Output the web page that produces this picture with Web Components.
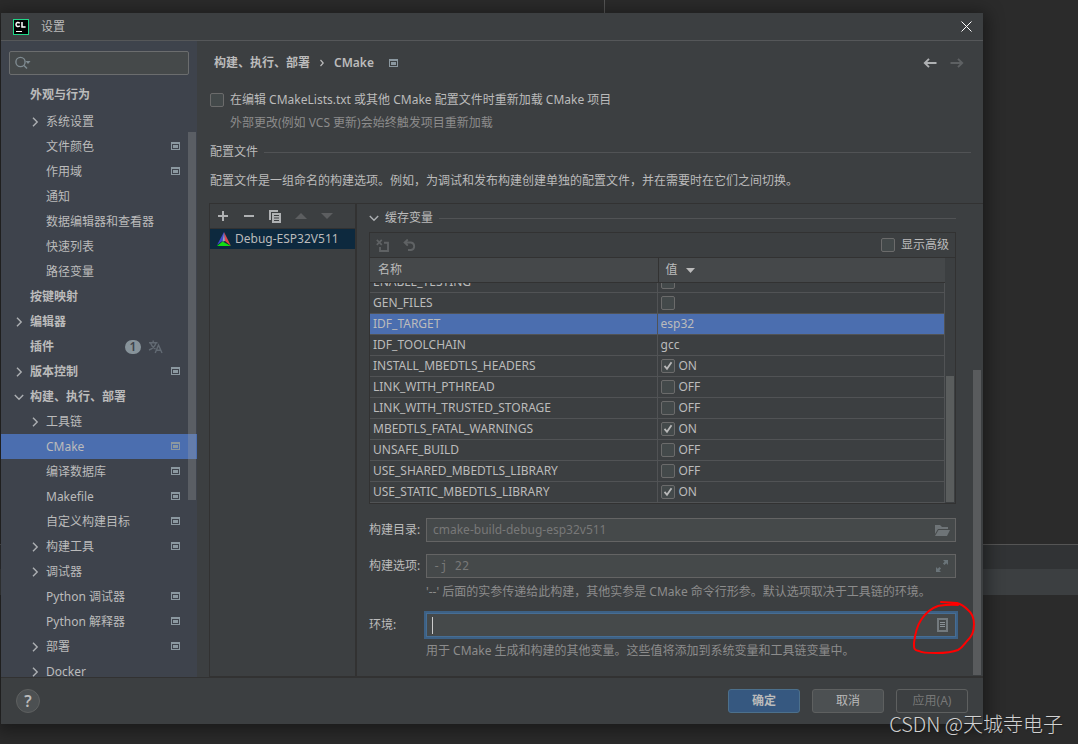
<!DOCTYPE html>
<html lang="zh-CN">
<head>
<meta charset="utf-8">
<title>设置</title>
<style>
  html, body { margin: 0; height: 100%; overflow: hidden; background: #2b2b2b; }
  body {
    font: 12px/20px "Noto Sans", "Noto Sans CJK SC", sans-serif;
    color: #bbbbbb;
    --bg: #3c3f41; --side: #3e434c; --dark: #323232; --line: #515355;
    --sel: #4b6eaf; --dim: #8c8c8c; --field: #45494a; --edge: #646464;
  }
</style>
</head>
<body>
<ide-desktop>
  <settings-dialog heading="设置">
    <settings-tree slot="side">
      <tree-item level="0" bold top>外观与行为</tree-item>
      <tree-item level="1" arrow="right">系统设置</tree-item>
      <tree-item level="1" project>文件颜色</tree-item>
      <tree-item level="1" project>作用域</tree-item>
      <tree-item level="1">通知</tree-item>
      <tree-item level="1">数据编辑器和查看器</tree-item>
      <tree-item level="1">快速列表</tree-item>
      <tree-item level="1">路径变量</tree-item>
      <tree-item level="0" bold>按键映射</tree-item>
      <tree-item level="0" bold arrow="right">编辑器</tree-item>
      <tree-item level="0" bold badge="1">插件</tree-item>
      <tree-item level="0" bold arrow="right" project>版本控制</tree-item>
      <tree-item level="0" bold arrow="down">构建、执行、部署</tree-item>
      <tree-item level="1" arrow="right">工具链</tree-item>
      <tree-item level="1" project selected>CMake</tree-item>
      <tree-item level="1" project>编译数据库</tree-item>
      <tree-item level="1" project>Makefile</tree-item>
      <tree-item level="1" project>自定义构建目标</tree-item>
      <tree-item level="1" arrow="right" project>构建工具</tree-item>
      <tree-item level="1" arrow="right">调试器</tree-item>
      <tree-item level="1" project>Python 调试器</tree-item>
      <tree-item level="1" project>Python 解释器</tree-item>
      <tree-item level="1" arrow="right" project>部署</tree-item>
      <tree-item level="1" arrow="right">Docker</tree-item>
    </settings-tree>
    <cmake-page></cmake-page>
    <dialog-footer slot="footer"></dialog-footer>
  </settings-dialog>
  <pen-mark slot="over"></pen-mark>
  <span slot="mark">CSDN @天城寺电子</span>
</ide-desktop>

<script>
const define = (name, html, setup) => {
  const template = document.createElement('template');
  template.innerHTML = html;
  customElements.define(name, class extends HTMLElement {
    constructor() {
      super();
      this.attachShadow({ mode: 'open' }).append(template.content.cloneNode(true));
    }
    connectedCallback() { if (setup) setup(this, this.shadowRoot); }
  });
};

const ICONS = {
  logo: [16, 16, '<rect x=".5" y=".5" width="15" height="15" fill="#000" stroke="#21d789"/><path d="M6.800 4.200C5.300 2.800 3 3.500 3 5.500s2.300 2.800 3.800 1.300M9 3v5h3.600" fill="none" stroke="#fff" stroke-width="1.500"/><path d="M3 12.500h6" stroke="#fff"/>'],
  close: [11, 11, '<path d="M.5.5l10 10M10.500.5l-10 10" stroke="#fff" stroke-width="1"/>'],
  search: [18, 14, '<g fill="none" stroke="#7f8b91" stroke-width="1.400"><circle cx="5.500" cy="6" r="4.600"/><path d="M9 9.500l3 3"/></g><path d="M10.500 5h5L13 8z" fill="#7f8b91"/>'],
  right: [10, 10, '<path d="M3 .8L7.200 5 3 9.200" fill="none" stroke="#adb0b3" stroke-width="1.400"/>'],
  down: [10, 10, '<path d="M.8 3L5 7.200 9.200 3" fill="none" stroke="#adb0b3" stroke-width="1.400"/>'],
  crumb: [6, 8, '<path d="M1.500 1L4.200 4 1.500 7" fill="none" stroke="#bbb" stroke-width="1.200"/>'],
  project: [9, 9, '<path d="M0 0h9v8H0zM1 2v5h7V2z" fill="#8b98a0" fill-rule="evenodd"/><path d="M2 3h5v3H2z" fill="#8b98a0"/>'],
  translate: [15, 14, '<g fill="none" stroke="#626a73" stroke-width="1.400"><path d="M1 2.700h8.500M5.200.5v2M2.500 3c1 3 3 5 5 6M8 3C7 6 4 9 1 10"/><path d="M7.200 13l3.300-8 3.500 8M8.500 10.300h4"/></g>'],
  back: [14, 10, '<path d="M6 .8L1.800 5 6 9.200M2 5h11.500" fill="none" stroke="#afb1b3" stroke-width="1.900"/>'],
  forward: [14, 10, '<path d="M8 .8L12.200 5 8 9.200M12 5H.5" fill="none" stroke="#5e6163" stroke-width="1.900"/>'],
  add: [10, 10, '<path d="M0 5h10M5 0v10" stroke="#afb1b3" stroke-width="2"/>'],
  remove: [10, 10, '<path d="M0 5h10" stroke="#afb1b3" stroke-width="2"/>'],
  copy: [12, 13, '<path d="M0 0h9v2H2v8H0z" fill="#afb1b3"/><path d="M3 3h9v10H3zM5 5v1h5V5zM5 7.500v1h5v-1zM5 10v1h5v-1z" fill="#afb1b3" fill-rule="evenodd"/>'],
  up: [12, 6, '<path d="M0 6l6-6 6 6z" fill="#5c5e60"/>'],
  dn: [12, 6, '<path d="M0 0l6 6 6-6z" fill="#5c5e60"/>'],
  sort: [9, 5, '<path d="M0 0h9L4.500 5z" fill="#bbb"/>'],
  cmake: [14, 14, '<path d="M7 0L0 13l8-6z" fill="#3f48c8"/><path d="M7 0l7 14-6-5z" fill="#e0454a"/><path d="M0 14l5.500-4.500L14 14z" fill="#12dd12"/><path d="M7 1l1 8-2.500.800z" fill="#9ba0b8"/>'],
  unset: [13, 13, '<path d="M.8.800l5 5M5.800.800l-5 5" stroke="#5f6264" stroke-width="1.700"/><path d="M8 3.800h4V12H4V8" fill="none" stroke="#5f6264" stroke-width="1.900"/>'],
  undo: [13, 12, '<path d="M1.500 3.500H8a3.800 3.800 0 0 1 0 7.500H5M4.800.5l-3.200 3 3.200 3.200" fill="none" stroke="#5f6264" stroke-width="1.900"/>'],
  folder: [15, 11, '<path d="M0 0h5l2 2h6v2H3L0 9z" fill="#6e7477"/><path d="M3.500 5H15l-3 6H0z" fill="#6e7477"/>'],
  expand: [12, 12, '<g fill="#6a7479"><path d="M7 0h5v5L10.300 3.300 8.500 5.100 6.900 3.500 8.700 1.700z"/><path d="M5 12H0V7l1.700 1.700 1.800-1.800 1.600 1.600-1.800 1.800z"/></g>'],
  list: [11, 14, '<path d="M0 0h11v14H0zM2 2v10h7V2z" fill="#737a7e" fill-rule="evenodd"/><path d="M3 4.500h5M3 6.500h5M3 8.500h5" stroke="#8a9196"/>'],
};
define('ui-icon', '', (el, root) => {
  const [w, h, art] = ICONS[el.getAttribute('name')];
  root.innerHTML = `<style>:host{display:block;flex:none}svg{display:block}</style><svg width="${w}" height="${h}" viewBox="0 0 ${w} ${h}" aria-hidden="true">${art}</svg>`;
});

define('ide-desktop', `
<style>
  :host { display: block; position: relative; height: 100vh; box-sizing: border-box; padding: 13px 95px 20px 1px; overflow: hidden; }
  .editor-edge { position: absolute; top: 0; left: 604px; width: 1px; height: 13px; background: #555; }
  .tool { position: absolute; left: 0; right: 0; top: 544px; height: 51px; box-sizing: border-box; border-top: 1px solid #555; background: linear-gradient(#313335 24px, #3c3f41 24px); }
  .water { position: absolute; right: 15px; bottom: 5px; font: 300 20px/30px "Noto Sans CJK SC", sans-serif; color: #d2d2d2; text-shadow: 1px 1px 1px #222; white-space: nowrap; }
</style>
<div class="editor-edge"></div><div class="tool"></div>
<slot></slot>
<slot name="over"></slot>
<div class="water"><slot name="mark"></slot></div>`);

define('settings-dialog', `
<style>
  :host { display: flex; flex-direction: column; position: relative; height: 100%; background: var(--bg); box-shadow: 0 3px 16px 4px rgba(0,0,0,.4); }
  header { display: flex; align-items: center; gap: 12px; height: 27px; padding: 0 11px 0 12px; border-bottom: 1px solid #555759; }
  h1 { flex: 1; margin: 0; font-size: 12px; font-weight: 400; }
  button { padding: 0; border: 0; background: none; }
  main { flex: 1; display: grid; grid-template-columns: 196px 1fr; min-height: 0; }
</style>
<header><ui-icon name="logo"></ui-icon><h1></h1><button aria-label="关闭"><ui-icon name="close"></ui-icon></button></header>
<main><slot name="side"></slot><slot></slot></main>
<slot name="footer"></slot>`, (el, root) => { root.querySelector('h1').textContent = el.getAttribute('heading'); });

define('settings-tree', `
<style>
  :host { display: flex; flex-direction: column; position: relative; min-height: 0; overflow: hidden; background: var(--side); }
  .search { display: flex; align-items: center; flex: none; height: 22px; margin: 10px 8px 6px; padding: 0 5px; border: 1px solid #6b6d6e; border-radius: 2px; background: var(--field); }
  input { flex: 1; min-width: 0; border: 0; padding: 0; background: none; outline: 0; color: inherit; font: inherit; }
  .list { flex: 1; min-height: 0; overflow: hidden; }
  .thumb { position: absolute; right: 1px; top: 91px; width: 8px; height: 368px; background: rgba(166,166,166,.28); }
</style>
<label class="search"><ui-icon name="search"></ui-icon><input type="text" aria-label="搜索"></label>
<div class="list"><slot></slot></div>
<div class="thumb"></div>`);

define('tree-item', `
<style>
  :host { display: flex; align-items: center; height: 25px; padding: 0 17px 0 13px; }
  :host([top]) { height: 28px; }
  :host([level="1"]) { padding-left: 29px; }
  :host([bold]) { font-weight: 600; }
  :host([selected]) { background: var(--sel); }
  .arrow { width: 10px; margin-right: 6px; }
  .name { flex: 1; white-space: nowrap; }
  .badges { display: flex; align-items: center; gap: 7px; margin-right: 17px; }
  b { width: 16px; height: 14px; border-radius: 7px; background: #87939a; color: #3e434c; font: 600 12px/14px "Noto Sans", sans-serif; text-align: center; }
</style>
<span class="arrow"></span><span class="name"><slot></slot></span><span class="end"></span>`, (el, root) => {
  const arrow = el.getAttribute('arrow');
  if (arrow) root.querySelector('.arrow').innerHTML = `<ui-icon name="${arrow}"></ui-icon>`;
  const end = root.querySelector('.end');
  if (el.hasAttribute('project')) end.innerHTML = '<ui-icon name="project"></ui-icon>';
  if (el.hasAttribute('badge')) {
    end.className = 'badges';
    end.innerHTML = `<b>${el.getAttribute('badge')}</b><ui-icon name="translate"></ui-icon>`;
  }
});

define('check-box', `
<style>
  :host { display: block; }
  label { display: flex; align-items: center; gap: var(--gap, 6px); min-height: 20px; white-space: nowrap; }
  input { appearance: none; flex: none; box-sizing: border-box; width: 14px; height: 14px; margin: 0; border: 1px solid #6b6b6b; border-radius: 2px; background: #43494a; }
  input:checked { background: #43494a url('data:image/svg+xml,<svg xmlns="http://www.w3.org/2000/svg" viewBox="0 0 12 12"><path d="M2.500 5.800L5 8.800 9.500 2.200" fill="none" stroke="%23b8b8b8" stroke-width="1.800"/></svg>'); }
</style>
<label><input type="checkbox"><span><slot></slot></span></label>`, (el, root) => {
  const box = root.querySelector('input');
  box.checked = el.hasAttribute('checked');
  if (el.hasAttribute('name')) box.setAttribute('aria-label', el.getAttribute('name'));
});

define('section-title', `
<style>
  :host { display: flex; align-items: center; gap: 6px; height: 20px; }
  :host::after { content: ""; flex: 1; height: 1px; background: var(--line); }
</style><slot></slot>`);

define('cmake-page', `
<style>
  :host { display: flex; flex-direction: column; min-width: 0; min-height: 0; padding-left: 12px; }
  nav { display: flex; align-items: center; gap: 9px; flex: none; height: 44px; padding: 0 19px 0 5px; font-weight: 600; }
  nav a { color: inherit; text-decoration: none; }
  .current { margin-right: 6px; }
  .history { display: flex; gap: 13px; margin-left: auto; }
  button { padding: 0; border: 0; background: none; }
  .top { padding-left: 1px; }
  check-box { margin-top: 5px; }
  p { margin: 0; }
  .hint { margin: 3px 0 9px 20px; color: var(--dim); }
  .wide { margin-right: 12px; }
  .about { margin: 9px 0 12px; }
  .panes { flex: 1; display: grid; grid-template-columns: 148px 1fr; min-height: 0; border-top: 1px solid var(--dark); border-bottom: 1px solid var(--dark); }
</style>
<nav><a href="#build">构建、执行、部署</a><ui-icon name="crumb"></ui-icon><span class="current">CMake</span><ui-icon name="project"></ui-icon>
  <span class="history"><button aria-label="后退"><ui-icon name="back"></ui-icon></button><button aria-label="前进" disabled><ui-icon name="forward"></ui-icon></button></span></nav>
<div class="top">
  <check-box>在编辑 CMakeLists.txt 或其他 CMake 配置文件时重新加载 CMake 项目</check-box>
  <p class="hint">外部更改(例如 VCS 更新)会始终触发项目重新加载</p>
  <section-title class="wide">配置文件</section-title>
  <p class="about">配置文件是一组命名的构建选项。例如，为调试和发布构建创建单独的配置文件，并在需要时在它们之间切换。</p>
</div>
<div class="panes"><profile-list></profile-list><profile-form></profile-form></div>`);

define('profile-list', `
<style>
  :host { display: block; border-left: 1px solid var(--dark); border-right: 2px solid var(--dark); }
  .tools { display: flex; align-items: center; gap: 14px; height: 24px; padding: 0 7px; border-bottom: 1px solid var(--dark); }
  button { padding: 0; border: 0; background: none; }
  .tools button { width: 12px; display: grid; place-items: center; }
  .row { display: flex; align-items: center; gap: 4px; width: 100%; height: 20px; padding: 0 7px; background: #0d293e; color: inherit; font: inherit; white-space: nowrap; }
</style>
<div class="tools">
  <button aria-label="添加"><ui-icon name="add"></ui-icon></button>
  <button aria-label="移除"><ui-icon name="remove"></ui-icon></button>
  <button aria-label="复制"><ui-icon name="copy"></ui-icon></button>
  <button aria-label="上移" disabled><ui-icon name="up"></ui-icon></button>
  <button aria-label="下移" disabled><ui-icon name="dn"></ui-icon></button>
</div>
<button class="row"><ui-icon name="cmake"></ui-icon><span>Debug-ESP32V511</span></button>`);

define('profile-form', `
<style>
  :host { display: block; position: relative; min-width: 0; min-height: 0; overflow: hidden; padding: 4px 27px 0 12px; }
  section-title { margin-bottom: 4px; }
  .thumb { position: absolute; right: 2px; top: 166px; bottom: 1px; width: 8px; background: #595b5d; }
</style>
<section-title><ui-icon name="down"></ui-icon><span>缓存变量</span></section-title>
<cache-table></cache-table>
<form-field label="构建目录:" text="cmake-build-debug-esp32v511" icon="folder"></form-field>
<form-field label="构建选项:" text="-j 22" icon="expand" mono>'--' 后面的实参传递给此构建，其他实参是 CMake 命令行形参。默认选项取决于工具链的环境。</form-field>
<form-field label="环境:" icon="list" active>用于 CMake 生成和构建的其他变量。这些值将添加到系统变量和工具链变量中。</form-field>
<div class="thumb"></div>`);

define('cache-table', `
<style>
  :host { display: block; position: relative; border: 1px solid var(--dark); margin-bottom: 14px; }
  .tools { display: flex; align-items: center; gap: 14px; height: 24px; padding: 0 6px; border-bottom: 1px solid var(--dark); }
  button { padding: 0; border: 0; background: none; }
  check-box { margin-left: auto; --gap: 6px; }
  table, thead { display: block; }
  table { margin-right: 10px; }
  tr { display: grid; grid-template-columns: 1fr 1fr; }
  tbody { display: block; height: 220px; overflow-y: auto; scrollbar-width: none; }
  th { height: 24px; line-height: 24px; padding: 0 8px; background: #45484a; border-bottom: 1px solid var(--dark); font-weight: 400; text-align: left; }
  th + th { border-left: 1px solid var(--dark); padding-left: 7px; }
  th div { display: flex; align-items: center; gap: 8px; }
  td { height: 20px; line-height: 20px; padding: 0 3px; border-bottom: 1px solid var(--line); border-right: 1px solid var(--line); overflow: hidden; white-space: nowrap; }
  td check-box { --gap: 4px; }
  tr.on td { background: var(--sel); }
  .thumb { position: absolute; right: 1px; bottom: 1px; width: 8px; height: 126px; background: #5a5d5d; }
</style>
<div class="tools"><button aria-label="取消设置" disabled><ui-icon name="unset"></ui-icon></button><button aria-label="还原" disabled><ui-icon name="undo"></ui-icon></button><check-box>显示高级</check-box></div>
<table><thead><tr><th>名称</th><th><div>值 <ui-icon name="sort"></ui-icon></div></th></tr></thead><tbody></tbody></table>
<div class="thumb"></div>`, (el, root) => {
  const rows = [['ENABLE_TESTING', false, ''], ['GEN_FILES', false, ''], ['IDF_TARGET', null, 'esp32'], ['IDF_TOOLCHAIN', null, 'gcc'],
    ['INSTALL_MBEDTLS_HEADERS', true, 'ON'], ['LINK_WITH_PTHREAD', false, 'OFF'], ['LINK_WITH_TRUSTED_STORAGE', false, 'OFF'],
    ['MBEDTLS_FATAL_WARNINGS', true, 'ON'], ['UNSAFE_BUILD', false, 'OFF'], ['USE_SHARED_MBEDTLS_LIBRARY', false, 'OFF'], ['USE_STATIC_MBEDTLS_LIBRARY', true, 'ON']];
  const body = root.querySelector('tbody');
  body.innerHTML = rows.map(([name, state, text]) =>
    `<tr class="${name === 'IDF_TARGET' ? 'on' : ''}"><td>${name}</td><td>${state === null ? text : `<check-box name="${name}" ${state ? 'checked' : ''}>${text}</check-box>`}</td></tr>`).join('');
  body.scrollTop = body.scrollHeight;
  requestAnimationFrame(() => { body.scrollTop = body.scrollHeight; });
});

define('form-field', `
<style>
  :host { display: grid; grid-template-columns: 57px 1fr; row-gap: 5px; margin-bottom: 12px; }
  label { line-height: 24px; white-space: nowrap; }
  .box { display: flex; align-items: center; position: relative; height: 22px; padding: 0 5px 0 6px; border: 1px solid var(--edge); background: var(--field); }
  .box button { display: grid; place-items: center; width: 16px; padding: 0; border: 0; background: none; }
  input { flex: 1; min-width: 0; padding: 0; border: 0; outline: 0; background: none; color: inherit; font: inherit; }
  input::placeholder { color: #787878; opacity: 1; }
  :host([mono]) input { font-family: "DejaVu Sans Mono", monospace; }
  :host([active]) .box { border-color: #466d94; box-shadow: 0 0 0 2px #3d6185; }
  .caret { display: none; position: absolute; left: 5px; top: 3px; width: 1px; height: 17px; background: #ccc; }
  :host([active]) .caret { display: block; }
  p { grid-column: 2; margin: 0; line-height: 18px; color: var(--dim); white-space: nowrap; }
</style>
<label for="field"></label>
<div class="box"><input id="field" type="text"><span class="caret"></span><button aria-label="打开"></button></div>
`, (el, root) => {
  root.querySelector('label').textContent = el.getAttribute('label');
  root.querySelector('input').placeholder = el.getAttribute('text') || '';
  root.querySelector('button').innerHTML = `<ui-icon name="${el.getAttribute('icon')}"></ui-icon>`;
  if (el.textContent) {
    const note = document.createElement('p');
    note.append(document.createElement('slot'));
    root.append(note);
  }
});

define('dialog-footer', `
<style>
  :host { display: flex; align-items: center; gap: 12px; flex: none; height: 46px; padding: 0 15px; border-top: 1px solid var(--dark); }
  button { box-sizing: border-box; width: 72px; height: 24px; padding: 0; border: 1px solid #5e6060; border-radius: 3px; background: #4c5052; color: #bbb; font: inherit; line-height: 22px; }
  .ok { background: #365880; border-color: #4c708c; font-weight: 600; }
  button:disabled { background: none; color: #777; }
  .help { width: 24px; margin-right: auto; border-radius: 12px; font-size: 16px; font-weight: 600; }
</style>
<button class="help" aria-label="帮助">?</button><button class="ok">确定</button><button>取消</button><button disabled>应用(A)</button>`);

define('pen-mark', `
<style>:host { display: block; position: absolute; left: 910px; top: 598px; } svg { display: block; }</style>
<svg width="68" height="60" viewBox="0 0 68 60" fill="none" stroke="#f00" stroke-width="2" stroke-linecap="round" stroke-linejoin="round" aria-hidden="true">
<path d="M31 4l16 1c4 1 8 4 11 7 5 4 6 8 6 14 0 8-2 12-7 17-4 5-5 7-9 9-5 2-13 3-22 3-7 0-14 0-17-2-6-1-5-4-5-8 1-9 3-17 7-23 5-8 11-12 17-14 6-1 11-2 20-1"/></svg>`);
</script>
</body>
</html>
